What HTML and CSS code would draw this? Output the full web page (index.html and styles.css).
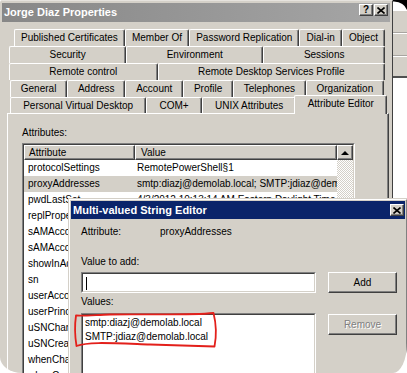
FILE: index.html
```html
<!DOCTYPE html>
<html>
<head>
<meta charset="utf-8">
<title>Jorge Diaz Properties</title>
<link rel="stylesheet" href="styles.css">
</head>
<body>
<div class="shot">
  <div class="win">
    <div class="titlebar">
      <span class="title">Jorge Diaz Properties</span>
      <span class="tbtns">
        <span class="tbtn q">?</span>
        <span class="tbtn">
          <svg width="8" height="7" viewBox="0 0 8 7"><path d="M0.5 0.5 L7.5 6.5 M7.5 0.5 L0.5 6.5" stroke="#000" stroke-width="1.6"/></svg>
        </span>
      </span>
    </div>
    <div class="tabs">
      <div class="row r1">
        <div class="tab">Published Certificates</div>
        <div class="tab">Member Of</div>
        <div class="tab">Password Replication</div>
        <div class="tab">Dial-in</div>
        <div class="tab">Object</div>
      </div>
      <div class="row r2">
        <div class="tab">Security</div>
        <div class="tab">Environment</div>
        <div class="tab">Sessions</div>
      </div>
      <div class="row r3">
        <div class="tab">Remote control</div>
        <div class="tab">Remote Desktop Services Profile</div>
      </div>
      <div class="row r4">
        <div class="tab">General</div>
        <div class="tab">Address</div>
        <div class="tab">Account</div>
        <div class="tab">Profile</div>
        <div class="tab">Telephones</div>
        <div class="tab">Organization</div>
      </div>
      <div class="row r5">
        <div class="tab">Personal Virtual Desktop</div>
        <div class="tab">COM+</div>
        <div class="tab">UNIX Attributes</div>
        <div class="tab sel">Attribute Editor</div>
      </div>
    </div>
    <div class="panel">
      <div class="lbl">Attributes:</div>
      <div class="list">
        <div class="list-in">
          <div class="grid">
            <div class="hdr">
              <div class="h c1">Attribute</div>
              <div class="h c2">Value</div>
            </div>
            <div class="item"><span class="c1">protocolSettings</span><span class="c2">RemotePowerShell§1</span></div>
            <div class="item on"><span class="c1">proxyAddresses</span><span class="c2">smtp:diazj@demolab.local; SMTP:jdiaz@demolab.local</span></div>
            <div class="item"><span class="c1">pwdLastSet</span><span class="c2">4/3/2012 10:13:14 AM Eastern Daylight Time</span></div>
            <div class="item"><span class="c1">replPropertyMetaData</span><span class="c2">AttID Ver Loc.USN</span></div>
            <div class="item"><span class="c1">sAMAccountName</span><span class="c2">jdiaz</span></div>
            <div class="item"><span class="c1">sAMAccountType</span><span class="c2">805306368</span></div>
            <div class="item"><span class="c1">showInAddressBook</span><span class="c2">CN=All Users</span></div>
            <div class="item"><span class="c1">sn</span><span class="c2">Diaz</span></div>
            <div class="item"><span class="c1">userAccountControl</span><span class="c2">0x200</span></div>
            <div class="item"><span class="c1">userPrincipalName</span><span class="c2">jdiaz@demolab.local</span></div>
            <div class="item"><span class="c1">uSNChanged</span><span class="c2">45321</span></div>
            <div class="item"><span class="c1">uSNCreated</span><span class="c2">41029</span></div>
            <div class="item"><span class="c1">whenChanged</span><span class="c2">4/3/2012</span></div>
            <div class="item"><span class="c1">whenCreated</span><span class="c2">4/2/2012</span></div>
          </div>
          <div class="vscroll">
            <div class="sbtn"><span class="up"></span></div>
          </div>
        </div>
      </div>
    </div>
  </div>

  <div class="side">
    <svg class="curl" width="14" height="10" viewBox="0 0 14 10"><path d="M0 0 H14 V10 Q11 2 1 1.5 L0 1.5 Z" fill="#000"/></svg>
    <div class="bgwin">
      <div class="bgband"></div>
      <div class="bgband"></div>
      <div class="bgband last"></div>
    </div>
  </div>

  <div class="mvse">
    <div class="mvse-in">
      <div class="mtitle">
        <span class="title">Multi-valued String Editor</span>
        <span class="tbtn close">
          <svg width="8" height="7" viewBox="0 0 8 7"><path d="M0.5 0.5 L7.5 6.5 M7.5 0.5 L0.5 6.5" stroke="#000" stroke-width="1.6"/></svg>
        </span>
      </div>
      <div class="mbody">
        <div class="arow"><span class="alab">Attribute:</span><span>proxyAddresses</span></div>
        <div class="mlab vta">Value to add:</div>
        <div class="frow">
          <div class="field"><div class="field-in"><span class="caret"></span></div></div>
          <div class="btn">Add</div>
        </div>
        <div class="mlab vals">Values:</div>
        <div class="frow vrow">
          <div class="field tall">
            <div class="field-in">
              <div class="val">smtp:diazj@demolab.local</div>
              <div class="val">SMTP:jdiaz@demolab.local</div>
            </div>
          </div>
          <div class="btn off">Remove</div>
        </div>
      </div>
    </div>
  </div>

  <svg class="mark" width="407" height="373" viewBox="0 0 407 373">
    <path d="M76 315.5 C74.5 326 75 337 76.5 346 C88 341.5 110 343 150 344.5 C180 345.5 200 346 214.5 346.5 C216.5 336 216 323 213.5 313 C190 315.5 150 314 110 314.5 C95 315 84 316 76 315.5 Z" fill="none" stroke="#e3201b" stroke-width="1.8" stroke-linejoin="round"/>
  </svg>
</div>
</body>
</html>
```

FILE: styles.css
```css
* { box-sizing: border-box; }
html, body { margin: 0; padding: 0; }
body {
  width: 407px;
  height: 373px;
  overflow: hidden;
  background: #fff;
  font-family: "Liberation Sans", Arial, sans-serif;
  font-size: 10px;
  color: #000;
}
.shot {
  position: relative;
  display: flex;
  width: 407px;
  height: 373px;
  overflow: hidden;
  background: #fff;
  border-radius: 3px 0 14px 22px / 3px 0 30px 16px;
}

/* main properties window */
.win {
  width: 393px;
  flex: none;
  height: 373px;
  background: #d4d0c8;
  border-top: 1px solid #e6e3de;
  border-right: 1px solid #404040;
  padding-top: 2px;
}
.titlebar {
  height: 19px;
  margin: 0 2px;
  display: flex;
  justify-content: space-between;
  align-items: flex-start;
  background: linear-gradient(to right, #878787, #a6a6a6);
}
.title {
  color: #fff;
  font-weight: bold;
  font-size: 11px;
  line-height: 19px;
  padding-left: 2px;
  white-space: nowrap;
}
.tbtns {
  display: flex;
  gap: 1px;
  padding: 1px 2px 0 0;
}
.tbtn {
  width: 14px;
  height: 12px;
  display: flex;
  align-items: center;
  justify-content: center;
  background: #d4d0c8;
  border: 1px solid;
  border-color: #fff #404040 #404040 #fff;
  box-shadow: inset -1px -1px #808080;
}
.tbtn.q {
  font-weight: bold;
  font-size: 10px;
  line-height: 10px;
}

/* tabs */
.tabs { margin-top: 7px; }
.row { display: flex; height: 17px; }
.r1 { margin-left: 14px; width: 371px; }
.r2, .r3 { margin-left: 9px; width: 376px; }
.r4 { margin-left: 10px; width: 374px; }
.r5 { margin-left: 10px; width: 375px; height: 16px; }
.tab {
  flex: 1 1 auto;
  text-align: center;
  white-space: nowrap;
  line-height: 16px;
  padding: 0 2px;
  background: #d4d0c8;
  border-top: 1px solid #fff;
  border-left: 1px solid #fff;
  border-right: 1px solid #404040;
  box-shadow: inset -1px 0 #808080;
  border-radius: 2px 2px 0 0;
}
.tab.sel {
  position: relative;
  z-index: 2;
  height: 19px;
  margin: -2px -2px 0 -2px;
  line-height: 15px;
  padding-top: 0;
}

/* attribute editor page */
.panel {
  margin-left: 7px;
  width: 382px;
  height: 270px;
  border-top: 1px solid #fff;
  border-left: 1px solid #fff;
  border-right: 1px solid #404040;
  box-shadow: inset -1px 0 #808080;
  padding: 13px 0 0 14px;
}
.lbl { line-height: 12px; }
.list {
  margin-top: 4px;
  width: 333px;
  height: 240px;
  border: 1px solid;
  border-color: #808080 #fff #fff #808080;
}
.list-in {
  height: 100%;
  display: flex;
  background: #fff;
  border: 1px solid;
  border-color: #404040 #d4d0c8 #d4d0c8 #404040;
}
.grid { flex: 1; min-width: 0; overflow: hidden; }
.hdr { display: flex; height: 15px; }
.h {
  background: #d4d0c8;
  border-top: 1px solid #fff;
  border-left: 1px solid #fff;
  border-right: 1px solid #404040;
  border-bottom: 1px solid #404040;
  box-shadow: inset -1px -1px #808080;
  line-height: 13px;
  padding-left: 4px;
  white-space: nowrap;
}
.hdr .c1 { width: 111px; flex: none; }
.hdr .c2 { flex: 1; padding-left: 5px; }
.item {
  display: flex;
  height: 16px;
  line-height: 16px;
  white-space: nowrap;
}
.item.on { background: #d4d0c8; }
.item .c1 { width: 111px; flex: none; padding-left: 4px; overflow: hidden; }
.item .c2 { padding-left: 2px; }
.vscroll {
  width: 16px;
  flex: none;
  background: repeating-conic-gradient(#fff 0 25%, #d4d0c8 0 50%) 0 0 / 2px 2px;
}
.sbtn {
  height: 15px;
  display: flex;
  align-items: center;
  justify-content: center;
  background: #d4d0c8;
  border: 1px solid;
  border-color: #fff #404040 #404040 #fff;
  box-shadow: inset -1px -1px #808080;
}
.up {
  width: 0;
  height: 0;
  border-left: 4px solid transparent;
  border-right: 4px solid transparent;
  border-bottom: 4px solid #000;
}

/* sliver of a window behind on the right */
.side {
  flex: 1;
  display: flex;
  flex-direction: column;
  background: #fff;
}
.curl { display: block; flex: none; }
.bgwin {
  height: 68px;
  background: #d4d0c8;
}
.bgband {
  height: 23px;
  border-top: 1px solid #fff;
  border-bottom: 1px solid #a8a5a0;
}
.bgband.last { height: 22px; border-bottom: 2px solid #505050; }

/* overlay dialog */
.mvse {
  position: absolute;
  left: 68px;
  top: 198px;
  width: 340px;
  height: 190px;
  background: #d4d0c8;
  border: 1px solid;
  border-color: #d4d0c8 #404040 #404040 #d4d0c8;
  z-index: 5;
}
.mvse-in {
  height: 100%;
  border: 1px solid;
  border-color: #fff #808080 #808080 #fff;
  padding: 1px;
}
.mtitle {
  height: 18px;
  display: flex;
  justify-content: space-between;
  align-items: center;
  background: #0a246a;
  padding-right: 1px;
}
.mtitle .title { line-height: 18px; }
.mbody { padding: 7px 0 0 10px; }
.arow { display: flex; line-height: 12px; }
.alab { width: 79px; }
.mlab { line-height: 12px; }
.vta { margin-top: 18px; }
.vals { margin-top: 3px; }
.frow { display: flex; gap: 12px; margin-top: 4px; align-items: flex-start; }
.vrow { margin-top: 5px; }
.field {
  width: 235px;
  height: 21px;
  border: 1px solid;
  border-color: #808080 #fff #fff #808080;
}
.field.tall { height: 80px; }
.field-in {
  height: 100%;
  background: #fff;
  border: 1px solid;
  border-color: #404040 #d4d0c8 #d4d0c8 #404040;
  padding: 1px 0 0 2px;
}
.caret {
  display: block;
  width: 1px;
  height: 13px;
  margin: 2px 0 0 1px;
  background: #000;
}
.val { line-height: 14px; white-space: nowrap; }
.btn {
  width: 69px;
  height: 21px;
  text-align: center;
  line-height: 19px;
  background: #d4d0c8;
  border: 1px solid;
  border-color: #fff #404040 #404040 #fff;
  box-shadow: inset -1px -1px #808080;
}
.btn.off {
  margin-top: 1px;
  color: #808080;
  text-shadow: 1px 1px 0 #fff;
}

.mark {
  position: absolute;
  left: 0;
  top: 0;
  z-index: 6;
  pointer-events: none;
}
```
